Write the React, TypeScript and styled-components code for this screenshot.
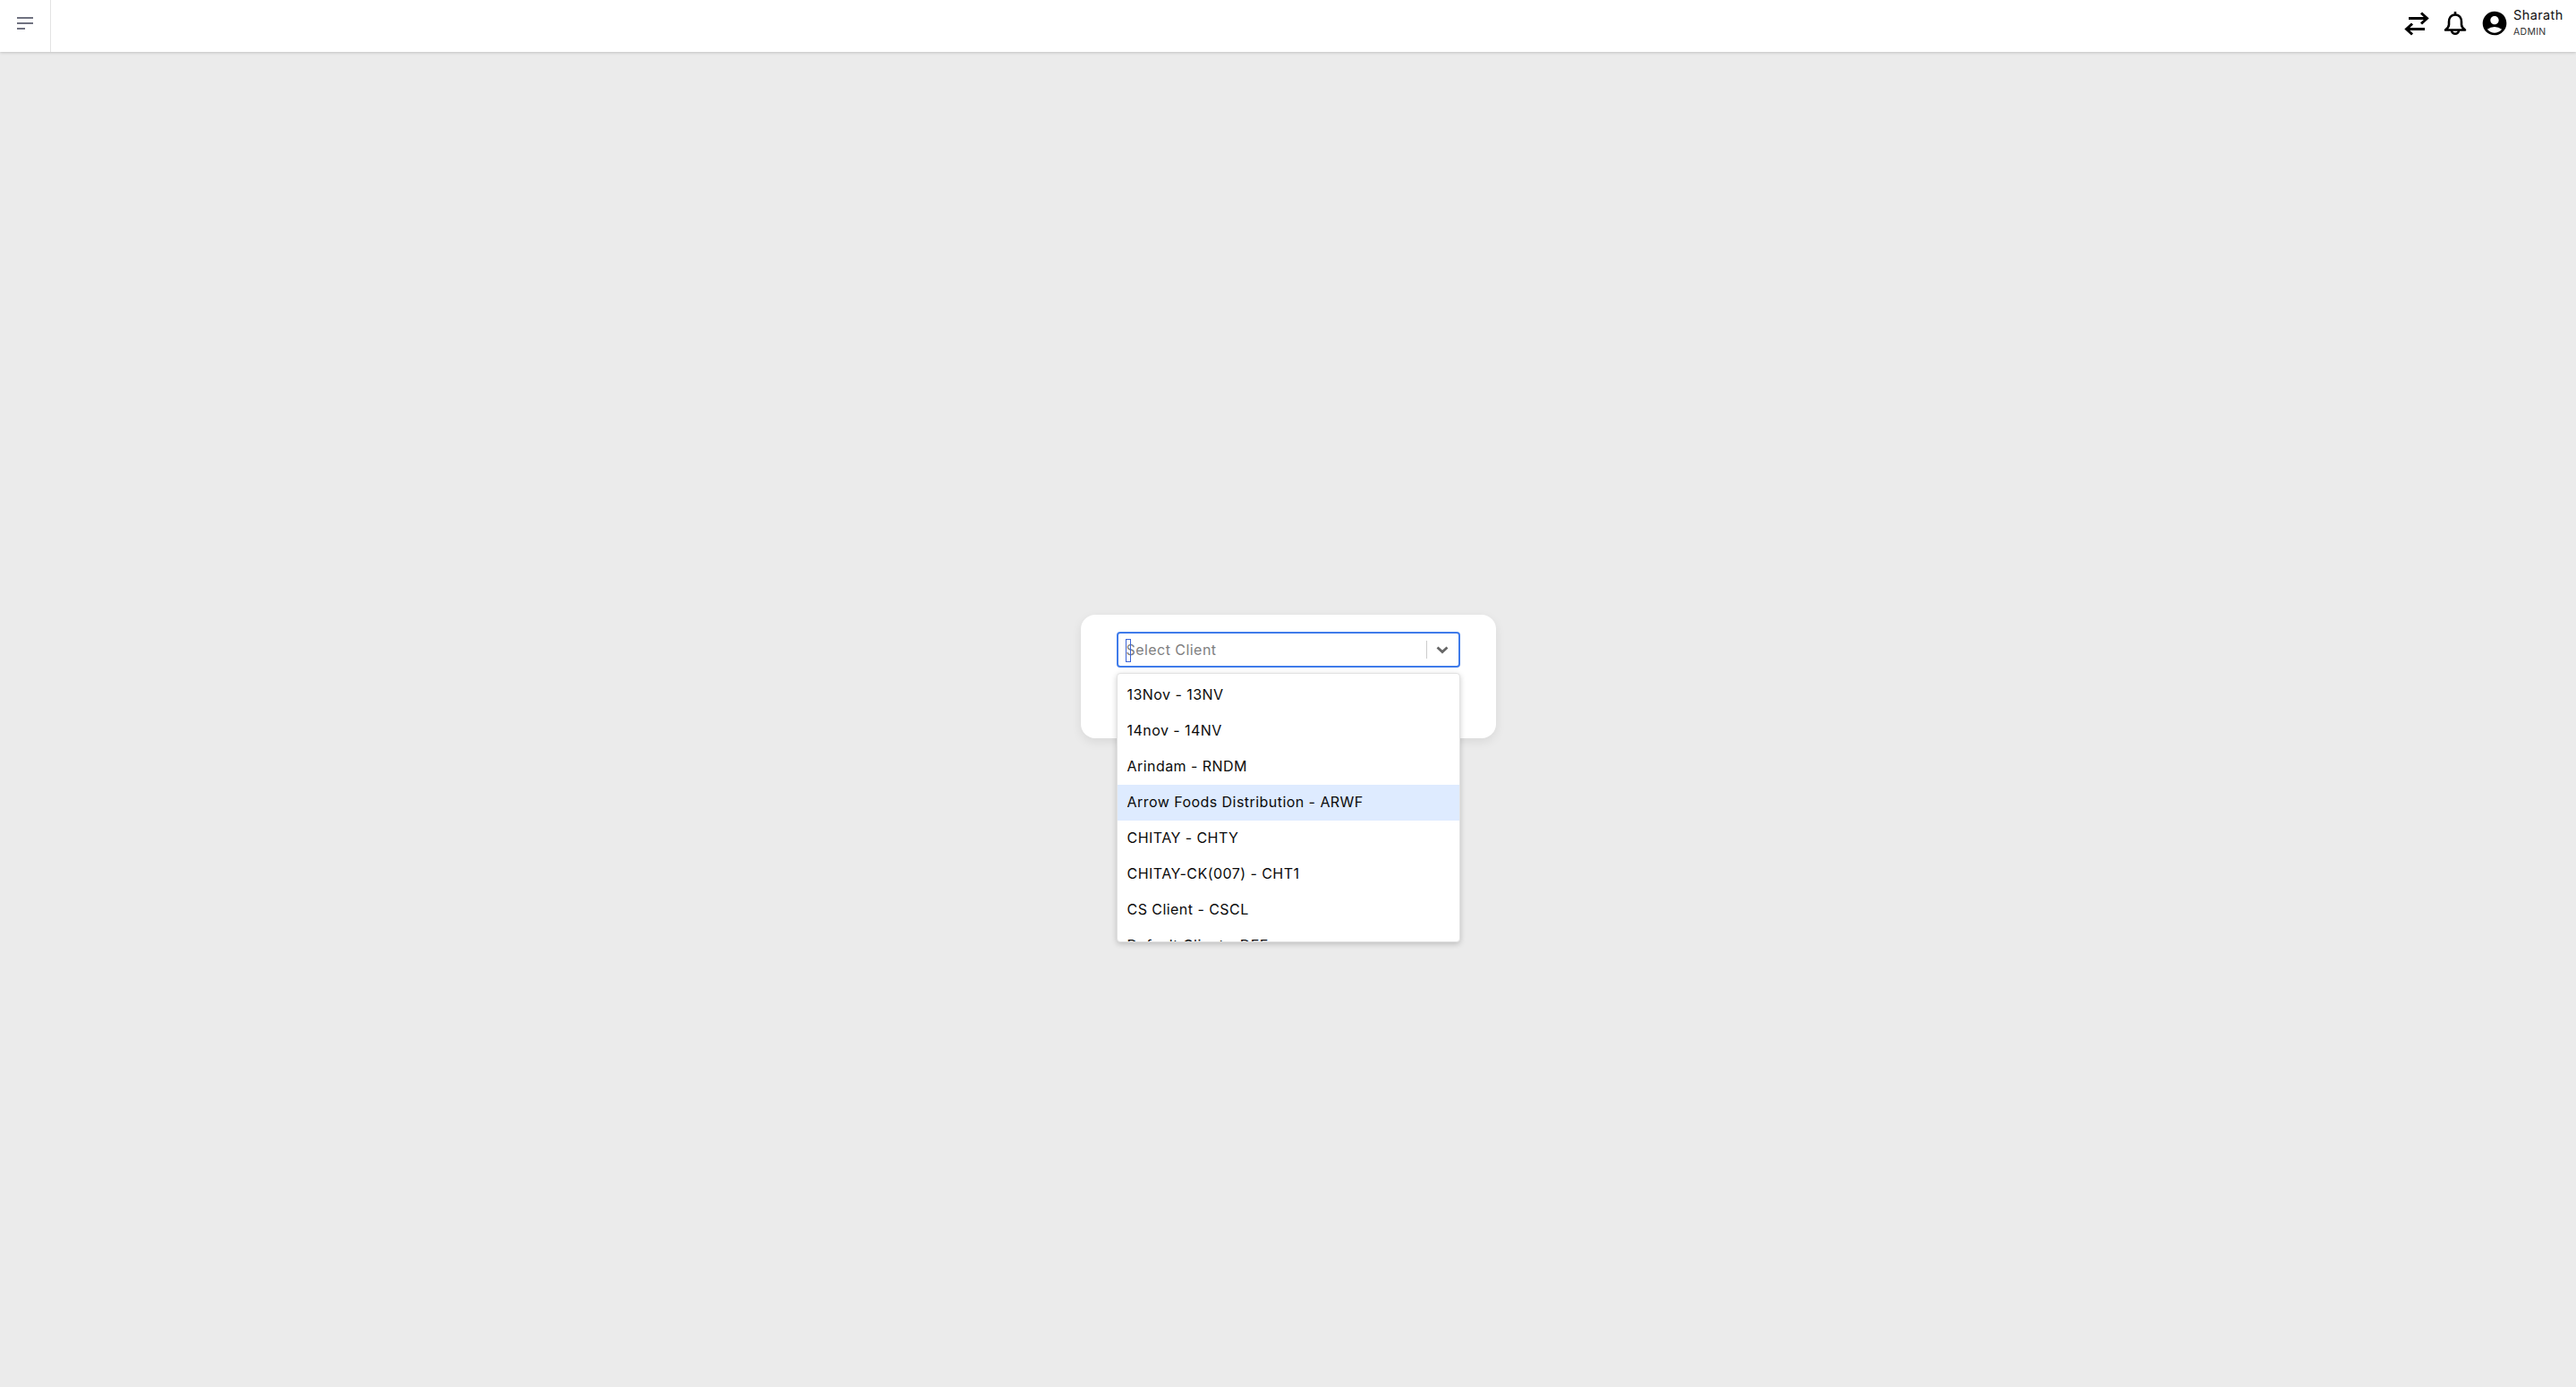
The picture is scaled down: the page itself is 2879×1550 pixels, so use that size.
import React from 'react'
import styled, { createGlobalStyle } from 'styled-components'
import { MdAccountCircle } from 'react-icons/md'

const clients = [
  '13Nov - 13NV',
  '14nov - 14NV',
  'Arindam - RNDM',
  'Arrow Foods Distribution - ARWF',
  'CHITAY - CHTY',
  'CHITAY-CK(007) - CHT1',
  'CS Client - CSCL',
  'Default Client - DEF',
]

const GlobalStyle = createGlobalStyle`
  html, body {
    margin: 0;
    padding: 0;
    background: #ebebeb;
    font-family: Inter, "DejaVu Sans", sans-serif;
  }
`

const Page = styled.div`
  display: flex;
  flex-direction: column;
  height: 1550px;
  overflow: hidden;
`

const Header = styled.header`
  display: flex;
  align-items: stretch;
  justify-content: space-between;
  height: 58px;
  background: #fff;
  box-shadow: 0 1px 3px rgba(0, 0, 0, 0.18);
`

const MenuCell = styled.div`
  display: flex;
  align-items: center;
  justify-content: center;
  box-sizing: border-box;
  width: 57px;
  padding-bottom: 6px;
  border-right: 1px solid #e3e3e3;
`

const HeaderRight = styled.div`
  display: flex;
  align-items: center;
  padding: 0 16px 6px 0;
  color: #000;
`

const IconSlot = styled.span<{ $gap: number }>`
  display: flex;
  margin-right: ${p => p.$gap}px;
`

const UserBlock = styled.div`
  display: flex;
  flex-direction: column;
  width: 54px;
`

const UserName = styled.span`
  font-size: 14.5px;
  line-height: 20px;
  letter-spacing: 0.4px;
  color: #111;
`

const UserRole = styled.span`
  font-size: 10.5px;
  line-height: 18px;
  letter-spacing: 0.3px;
  color: #333;
`

const Main = styled.main`
  flex: 1;
  display: flex;
  align-items: center;
  justify-content: center;
  padding-bottom: 96px;
`

const Card = styled.div`
  position: relative;
  box-sizing: border-box;
  width: 464px;
  height: 138px;
  padding: 19px 40px;
  background: #fff;
  border-radius: 16px;
  box-shadow: 0 4px 12px rgba(0, 0, 0, 0.08);
`

const SelectBox = styled.div`
  display: flex;
  align-items: center;
  box-sizing: border-box;
  height: 40px;
  border: 2px solid #3f7bea;
  border-radius: 4px;
  background: #fff;
`

const Placeholder = styled.div`
  position: relative;
  flex: 1;
  padding-left: 9px;
  font-size: 16px;
  line-height: 23px;
  letter-spacing: 0.45px;
  color: #808080;
`

const Caret = styled.span`
  position: absolute;
  left: 8px;
  top: -1px;
  box-sizing: border-box;
  width: 6px;
  height: 26px;
  border: 1px solid #3a63d8;
`

const Divider = styled.span`
  width: 1px;
  height: 20px;
  background: #ccc;
`

const Chevron = styled.span`
  display: flex;
  justify-content: center;
  width: 35px;
`

const Menu = styled.ul`
  position: absolute;
  left: 40px;
  top: 65px;
  box-sizing: border-box;
  width: 384px;
  height: 301px;
  margin: 0;
  padding: 4px 0;
  list-style: none;
  background: #fff;
  border: 1px solid #e2e2e2;
  border-radius: 4px;
  box-shadow: 0 2px 6px rgba(0, 0, 0, 0.2);
  overflow: hidden;
`

const MenuItem = styled.li<{ $active?: boolean }>`
  box-sizing: border-box;
  height: 40px;
  padding: 0 11px;
  font-size: 16px;
  line-height: 38px;
  letter-spacing: 0.45px;
  color: #0a0a0a;
  white-space: nowrap;
  background: ${p => (p.$active ? '#deebff' : 'transparent')};
`

const SwapIcon = () => (
  <svg width="30" height="30" viewBox="0 0 30 30" fill="none" stroke="#000" strokeWidth="3">
    <path d="M6 9.5 H26.5 M20 3.5 L26.5 9.5 L20 15.5" />
    <path d="M24 21.5 H3.5 M10 15.5 L3.5 21.5 L10 27.5" />
  </svg>
)

const BellIcon = () => (
  <svg width="26" height="28" viewBox="0 0 26 28" fill="none" stroke="#000" strokeWidth="2.6">
    <path d="M13 1 V4.5" />
    <path d="M13 4.5 C8 4.5 6 8.5 6 12.5 V15.5 C6 18 4 20 2 21.5 H24 C22 20 20 18 20 15.5 V12.5 C20 8.5 18 4.5 13 4.5 Z" strokeLinejoin="round" />
    <path d="M9 22 C9 27 17 27 17 22" />
  </svg>
)

export default function App() {
  return (
    <Page>
      <GlobalStyle />
      <Header>
        <MenuCell>
          <svg width="18" height="14" viewBox="0 0 18 14">
            <g fill="#6f7180">
              <rect x="0" y="0" width="18" height="2" />
              <rect x="0" y="6" width="18" height="2" />
              <rect x="0" y="12" width="9" height="2" />
            </g>
          </svg>
        </MenuCell>
        <HeaderRight>
          <IconSlot $gap={15}><SwapIcon /></IconSlot>
          <IconSlot $gap={15}><BellIcon /></IconSlot>
          <IconSlot $gap={5}><MdAccountCircle size={32} /></IconSlot>
          <UserBlock>
            <UserName>Sharath</UserName>
            <UserRole>ADMIN</UserRole>
          </UserBlock>
        </HeaderRight>
      </Header>
      <Main>
        <Card>
          <SelectBox>
            <Placeholder>
              <Caret />
              Select Client
            </Placeholder>
            <Divider />
            <Chevron>
              <svg width="14" height="9" viewBox="0 0 14 9" fill="none">
                <path d="M1.5 1.5 L7 6.5 L12.5 1.5" stroke="#666" strokeWidth="2.8" />
              </svg>
            </Chevron>
          </SelectBox>
          <Menu>
            {clients.map(name => (
              <MenuItem key={name} $active={name.startsWith('Arrow')}>{name}</MenuItem>
            ))}
          </Menu>
        </Card>
      </Main>
    </Page>
  )
}
